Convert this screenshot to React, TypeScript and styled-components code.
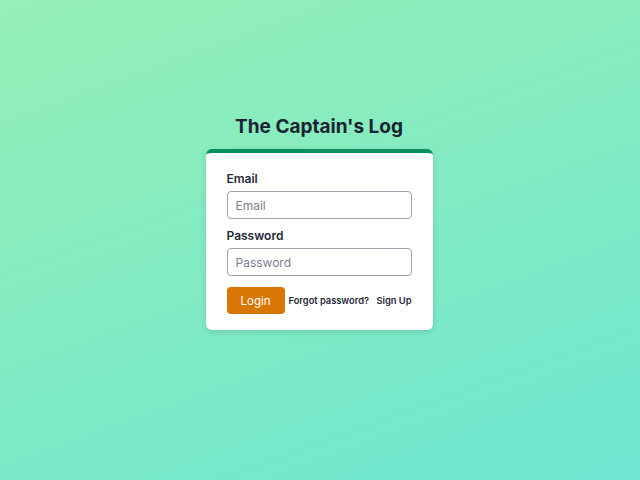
import React from "react";
import styled, { createGlobalStyle } from "styled-components";

const Global = createGlobalStyle`
  html, body { margin: 0; padding: 0; }
  body { font-family: Inter, "Noto Sans", sans-serif; }
  * { box-sizing: border-box; }
`;

const Page = styled.div`
  width: 640px;
  height: 480px;
  background: linear-gradient(160deg, #95efb6 0%, #6ee6d0 100%);
  display: flex;
  flex-direction: column;
  align-items: center;
  padding-top: 113px;
`;

const Title = styled.h1`
  margin: 0 0 8px;
  font-size: 19px;
  line-height: 28px;
  font-weight: 700;
  color: #1a2332;
  transform: translateX(-1px);
`;

const Card = styled.form`
  width: 227px;
  background: #fff;
  border-top: 4px solid #0b8f5e;
  border-radius: 6px;
  box-shadow: 0 2px 6px rgba(0, 0, 0, 0.12);
  padding: 17px 21px 16px;
  margin-right: 2px;
  display: flex;
  flex-direction: column;
`;

const Label = styled.label`
  font-size: 12px;
  line-height: 18px;
  font-weight: 600;
  color: #1f2937;
  margin-bottom: 3px;
`;

const Input = styled.input`
  width: 185px;
  height: 28px;
  border: 1px solid #9ca3af;
  border-radius: 4px;
  padding: 0 8px;
  font-family: inherit;
  font-size: 12px;
  color: #111827;
  margin-bottom: 8px;
  &::placeholder { color: #7b8190; }
`;

const Actions = styled.div`
  display: flex;
  align-items: center;
  margin-top: 3px;
`;

const Button = styled.button`
  flex-shrink: 0;
  width: 58px;
  height: 27px;
  background: #d97706;
  color: #fff;
  border: none;
  border-radius: 4px;
  font-family: inherit;
  font-size: 11.5px;
  margin-right: 4px;
`;

const LinkText = styled.a<{ $push?: boolean }>`
  font-size: 9.3px;
  font-weight: 600;
  color: #1f2937;
  text-decoration: none;
  white-space: nowrap;
  margin-left: ${(p) => (p.$push ? "auto" : "0")};
`;

export default function App() {
  return (
    <>
      <Global />
      <Page>
        <Title>The Captain's Log</Title>
        <Card onSubmit={(e) => e.preventDefault()}>
          <Label>Email</Label>
          <Input placeholder="Email" />
          <Label>Password</Label>
          <Input placeholder="Password" type="password" />
          <Actions>
            <Button type="submit">Login</Button>
            <LinkText>Forgot password?</LinkText>
            <LinkText $push>Sign Up</LinkText>
          </Actions>
        </Card>
      </Page>
    </>
  );
}
